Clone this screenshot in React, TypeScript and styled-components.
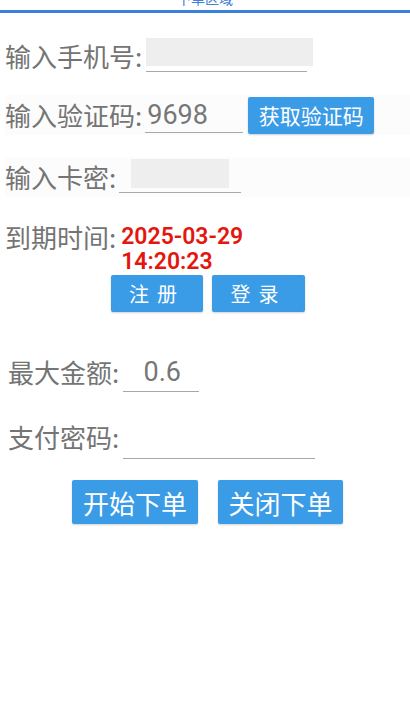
import styled, { createGlobalStyle } from 'styled-components';

const GlobalStyle = createGlobalStyle`
  body {
    margin: 0;
    background: #fff;
    font-family: Roboto, "Noto Sans CJK SC", sans-serif;
  }
`;

const Page = styled.div`
  width: 410px;
  min-height: 716px;
  overflow: hidden;
`;

const Header = styled.div`
  height: 10px;
  border-bottom: 3px solid #3b80da;
  display: flex;
  justify-content: center;
  overflow: hidden;
`;

const Title = styled.div`
  margin-top: -9px;
  font-size: 14px;
  line-height: 14px;
  color: #3b80da;
  font-family: "Noto Sans CJK SC", sans-serif;
`;

const Section = styled.div<{ $pad: number }>`
  padding-left: ${({ $pad }) => $pad}px;
`;

const Row = styled.div<{ $top: number; $h?: number; $shade?: boolean; $align?: string }>`
  display: flex;
  align-items: ${({ $align }) => $align || 'center'};
  margin-top: ${({ $top }) => $top}px;
  height: ${({ $h }) => $h || 40}px;
  background: ${({ $shade }) => ($shade ? '#fcfcfc' : 'transparent')};
`;

const Label = styled.span<{ $lh?: number }>`
  font-family: "Noto Sans CJK SC", sans-serif;
  font-size: 26px;
  line-height: ${({ $lh }) => $lh || 40}px;
  color: #747474;
  white-space: nowrap;
`;

const Field = styled.div<{ $w: number; $h: number; $gap: number }>`
  width: ${({ $w }) => $w}px;
  height: ${({ $h }) => $h}px;
  margin-left: ${({ $gap }) => $gap}px;
  border-bottom: 1.5px solid #a8a8a8;
  flex-shrink: 0;
`;

const Fill = styled.div<{ $w: number; $h: number; $left?: number }>`
  width: ${({ $w }) => $w}px;
  height: ${({ $h }) => $h}px;
  margin-top: -3px;
  margin-left: ${({ $left }) => $left || 0}px;
  background: #eeeeee;
`;

const Value = styled.div<{ $center?: boolean; $h: number }>`
  font-family: Roboto, sans-serif;
  font-size: 27px;
  line-height: ${({ $h }) => $h}px;
  color: #777;
  padding-left: 2px;
  text-align: ${({ $center }) => ($center ? 'center' : 'left')};
`;

const Expiry = styled.div`
  margin-left: 5px;
  font-family: Roboto, sans-serif;
  font-weight: 600;
  font-size: 23px;
  line-height: 25px;
  color: #e3170f;
`;

const BlueButton = styled.button<{ $w: number; $h: number; $fs: number; $ls?: number }>`
  width: ${({ $w }) => $w}px;
  height: ${({ $h }) => $h}px;
  border: none;
  border-radius: 2px;
  background: #3a9be7;
  color: #fff;
  font-family: "Noto Sans CJK SC", sans-serif;
  font-size: ${({ $fs }) => $fs}px;
  letter-spacing: ${({ $ls }) => $ls || 0}px;
  box-shadow: 0 1px 2px rgba(0, 0, 0, 0.18);
  padding: 0;
  flex-shrink: 0;
`;

const ButtonRow = styled.div<{ $top: number; $gap: number; $shift: number }>`
  display: flex;
  justify-content: center;
  gap: ${({ $gap }) => $gap}px;
  margin-top: ${({ $top }) => $top}px;
  padding-left: ${({ $shift }) => $shift}px;
`;

export default function App() {
  return (
    <Page>
      <GlobalStyle />
      <Header>
        <Title>下单区域</Title>
      </Header>

      <Section $pad={5}>
        <Row $top={23}>
          <Label>输入手机号:</Label>
          <Field $w={161} $h={30} $gap={4}>
            <Fill $w={167} $h={28} />
          </Field>
        </Row>

        <Row $top={19} $shade>
          <Label>输入验证码:</Label>
          <Field $w={98} $h={34} $gap={3}>
            <Value $h={34}>9698</Value>
          </Field>
          <BlueButton $w={126} $h={37} $fs={21} style={{ marginLeft: 5 }}>
            获取验证码
          </BlueButton>
        </Row>

        <Row $top={22} $shade>
          <Label>输入卡密:</Label>
          <Field $w={122} $h={30} $gap={3}>
            <Fill $w={98} $h={29} $left={12} />
          </Field>
        </Row>

        <Row $top={27} $h={50} $align="flex-start">
          <Label $lh={25}>到期时间:</Label>
          <Expiry>
            2025-03-29
            <br />
            14:20:23
          </Expiry>
        </Row>
      </Section>

      <ButtonRow $top={1} $gap={9} $shift={6}>
        <BlueButton $w={92} $h={37} $fs={20} $ls={8}>
          注册
        </BlueButton>
        <BlueButton $w={93} $h={37} $fs={20} $ls={8}>
          登录
        </BlueButton>
      </ButtonRow>

      <Section $pad={8}>
        <Row $top={40}>
          <Label>最大金额:</Label>
          <Field $w={76} $h={38} $gap={4}>
            <Value $h={38} $center>
              0.6
            </Value>
          </Field>
        </Row>

        <Row $top={25}>
          <Label>支付密码:</Label>
          <Field $w={192} $h={42} $gap={4} />
        </Row>
      </Section>

      <ButtonRow $top={23} $gap={20} $shift={5}>
        <BlueButton $w={126} $h={44} $fs={26}>
          开始下单
        </BlueButton>
        <BlueButton $w={125} $h={44} $fs={26}>
          关闭下单
        </BlueButton>
      </ButtonRow>
    </Page>
  );
}
